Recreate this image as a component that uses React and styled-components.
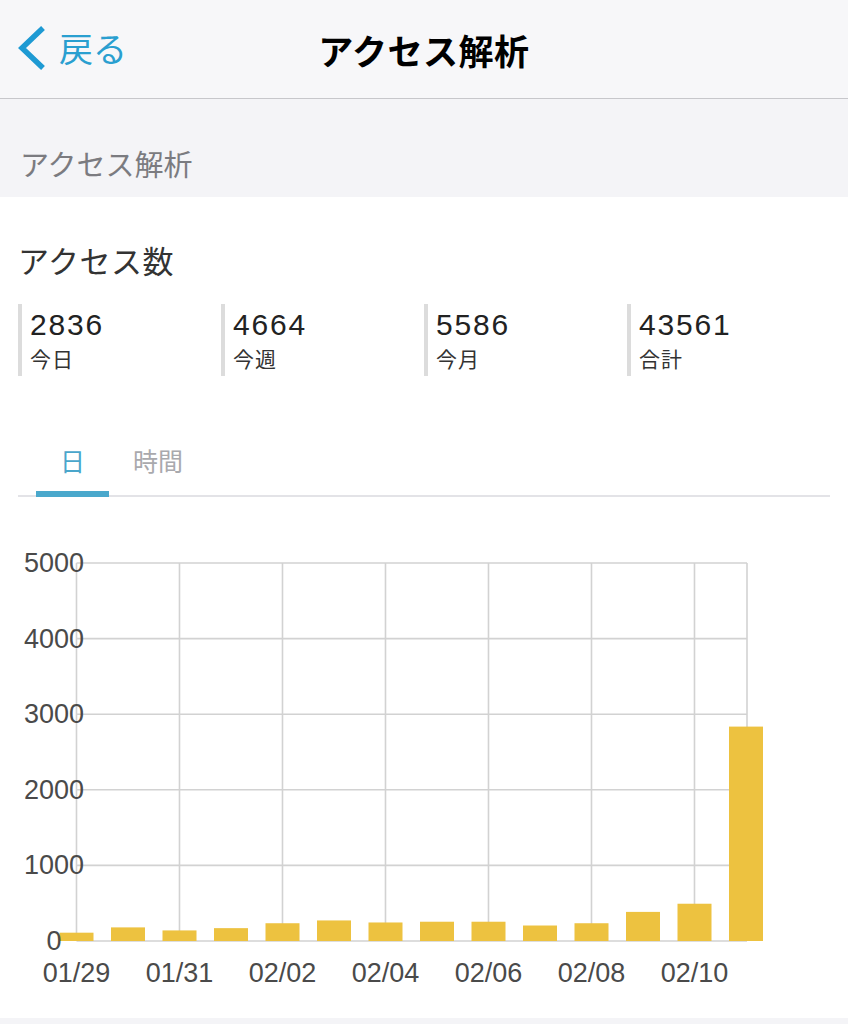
import React from 'react';
import styled, { createGlobalStyle } from 'styled-components';

const GlobalStyle = createGlobalStyle`
  html, body {
    margin: 0;
    padding: 0;
    background: #f4f4f7;
  }
  body {
    font-family: "Noto Sans CJK JP", "Noto Sans", sans-serif;
    -webkit-font-smoothing: antialiased;
  }
`;

const Page = styled.div`
  width: 848px;
  min-height: 100vh;
  background: #f4f4f7;
`;

const NavBar = styled.header`
  height: 98px;
  background: #f7f7f9;
  border-bottom: 1px solid #c7c7cb;
  display: grid;
  grid-template-columns: 1fr auto 1fr;
  align-items: center;
`;

const BackButton = styled.a`
  display: flex;
  align-items: center;
  gap: 12px;
  padding-left: 17px;
  color: #2a9fd0;
  font-size: 34px;
  line-height: 1;
  text-decoration: none;
  margin-top: -2px;
`;

const NavTitle = styled.h1`
  margin: 0;
  font-size: 35px;
  font-weight: 700;
  color: #000;
  letter-spacing: 0.5px;
`;

const SectionBar = styled.div`
  height: 98px;
  display: flex;
  align-items: flex-end;
  padding: 0 0 14px 20px;
  box-sizing: border-box;
  color: #7b7b80;
  font-size: 29px;
  line-height: 40px;
`;

const Card = styled.section`
  background: #fff;
  padding: 43px 18px 0;
`;

const CardTitle = styled.h2`
  margin: 0;
  font-size: 31px;
  font-weight: 400;
  line-height: 40px;
  color: #333;
  letter-spacing: 0.5px;
`;

const StatsRow = styled.div`
  margin-top: 24px;
  display: grid;
  grid-template-columns: repeat(4, 1fr);
`;

const Stat = styled.div`
  border-left: 4px solid #dcdcdc;
  padding: 5px 0 0 8px;
  height: 72px;
  box-sizing: border-box;
  display: flex;
  flex-direction: column;
  gap: 4px;
`;

const StatValue = styled.div`
  font-family: "Liberation Sans", Arial, sans-serif;
  font-size: 30px;
  line-height: 32px;
  color: #222;
  letter-spacing: 1.8px;
`;

const StatLabel = styled.div`
  font-size: 21px;
  line-height: 26px;
  color: #333;
  letter-spacing: 1px;
`;

const Tabs = styled.div`
  margin-top: 61px;
  display: flex;
  border-bottom: 2px solid #e3e3e7;
`;

const Tab = styled.div`
  position: relative;
  margin-left: ${(p) => (p.$first ? '18px' : '0')};
  padding: 0 24px 12px;
  font-size: 25px;
  line-height: 46px;
  color: ${(p) => (p.$active ? '#4aa6cb' : '#a9a9ad')};

  &::after {
    content: '';
    display: ${(p) => (p.$active ? 'block' : 'none')};
    position: absolute;
    left: 0;
    right: 0;
    bottom: -2px;
    height: 6px;
    background: #4aa8cc;
  }
`;

const ChartWrap = styled.div`
  margin: 0 -18px;
  height: 521px;
`;

const values = [110, 180, 140, 170, 235, 272, 245, 255, 255, 205, 235, 385, 493, 2836];
const tickLabels = ['01/29', '01/31', '02/02', '02/04', '02/06', '02/08', '02/10'];

const X0 = 76.5;
const STEP = 51.5;
const BASE = 941;
const TOP = 563;
const PER = (BASE - TOP) / 5000;
const RIGHT = 747;

function BarChart() {
  const gridColor = '#d2d2d2';
  const labelStyle = { fontFamily: '"Liberation Sans", Arial, sans-serif', fontSize: 27, fill: '#4a4a4a' };
  return (
    <svg width="848" height="521" viewBox="0 497 848 521">
      {[0, 1, 2, 3, 4, 5].map((k) => {
        const y = TOP + k * (BASE - TOP) / 5;
        return <line key={'h' + k} x1={X0} x2={RIGHT} y1={y} y2={y} stroke={gridColor} strokeWidth="1.6" />;
      })}
      {tickLabels.map((_, k) => {
        const x = X0 + k * STEP * 2;
        return <line key={'v' + k} x1={x} x2={x} y1={TOP} y2={BASE} stroke={gridColor} strokeWidth="1.6" />;
      })}
      <line x1={RIGHT} x2={RIGHT} y1={TOP} y2={BASE} stroke={gridColor} strokeWidth="1.6" />
      {values.map((v, i) => {
        const cx = X0 + i * STEP;
        const h = v * PER;
        return <rect key={'b' + i} x={cx - 17} y={BASE - h} width="34" height={h} fill="#edc240" />;
      })}
      {[5000, 4000, 3000, 2000, 1000, 0].map((v, k) => (
        <text key={'y' + v} x="54" y={TOP + k * (BASE - TOP) / 5 + 9} textAnchor="middle" style={labelStyle}>
          {v}
        </text>
      ))}
      {tickLabels.map((t, k) => (
        <text key={'x' + t} x={X0 + k * STEP * 2} y="982" textAnchor="middle" style={labelStyle}>
          {t}
        </text>
      ))}
    </svg>
  );
}

function ChevronLeft() {
  return (
    <svg width="30" height="46" viewBox="0 0 30 46">
      <polyline points="26,3 5,23 26,43" fill="none" stroke="#1e9ad3" strokeWidth="5.5" strokeLinejoin="miter" />
    </svg>
  );
}

export default function App() {
  const stats = [
    { value: '2836', label: '今日' },
    { value: '4664', label: '今週' },
    { value: '5586', label: '今月' },
    { value: '43561', label: '合計' },
  ];
  return (
    <Page>
      <GlobalStyle />
      <NavBar>
        <BackButton href="#">
          <ChevronLeft />
          <span>戻る</span>
        </BackButton>
        <NavTitle>アクセス解析</NavTitle>
        <div />
      </NavBar>
      <SectionBar>アクセス解析</SectionBar>
      <Card>
        <CardTitle>アクセス数</CardTitle>
        <StatsRow>
          {stats.map((s) => (
            <Stat key={s.label}>
              <StatValue>{s.value}</StatValue>
              <StatLabel>{s.label}</StatLabel>
            </Stat>
          ))}
        </StatsRow>
        <Tabs>
          <Tab $first $active>日</Tab>
          <Tab>時間</Tab>
        </Tabs>
        <ChartWrap>
          <BarChart />
        </ChartWrap>
      </Card>
    </Page>
  );
}
